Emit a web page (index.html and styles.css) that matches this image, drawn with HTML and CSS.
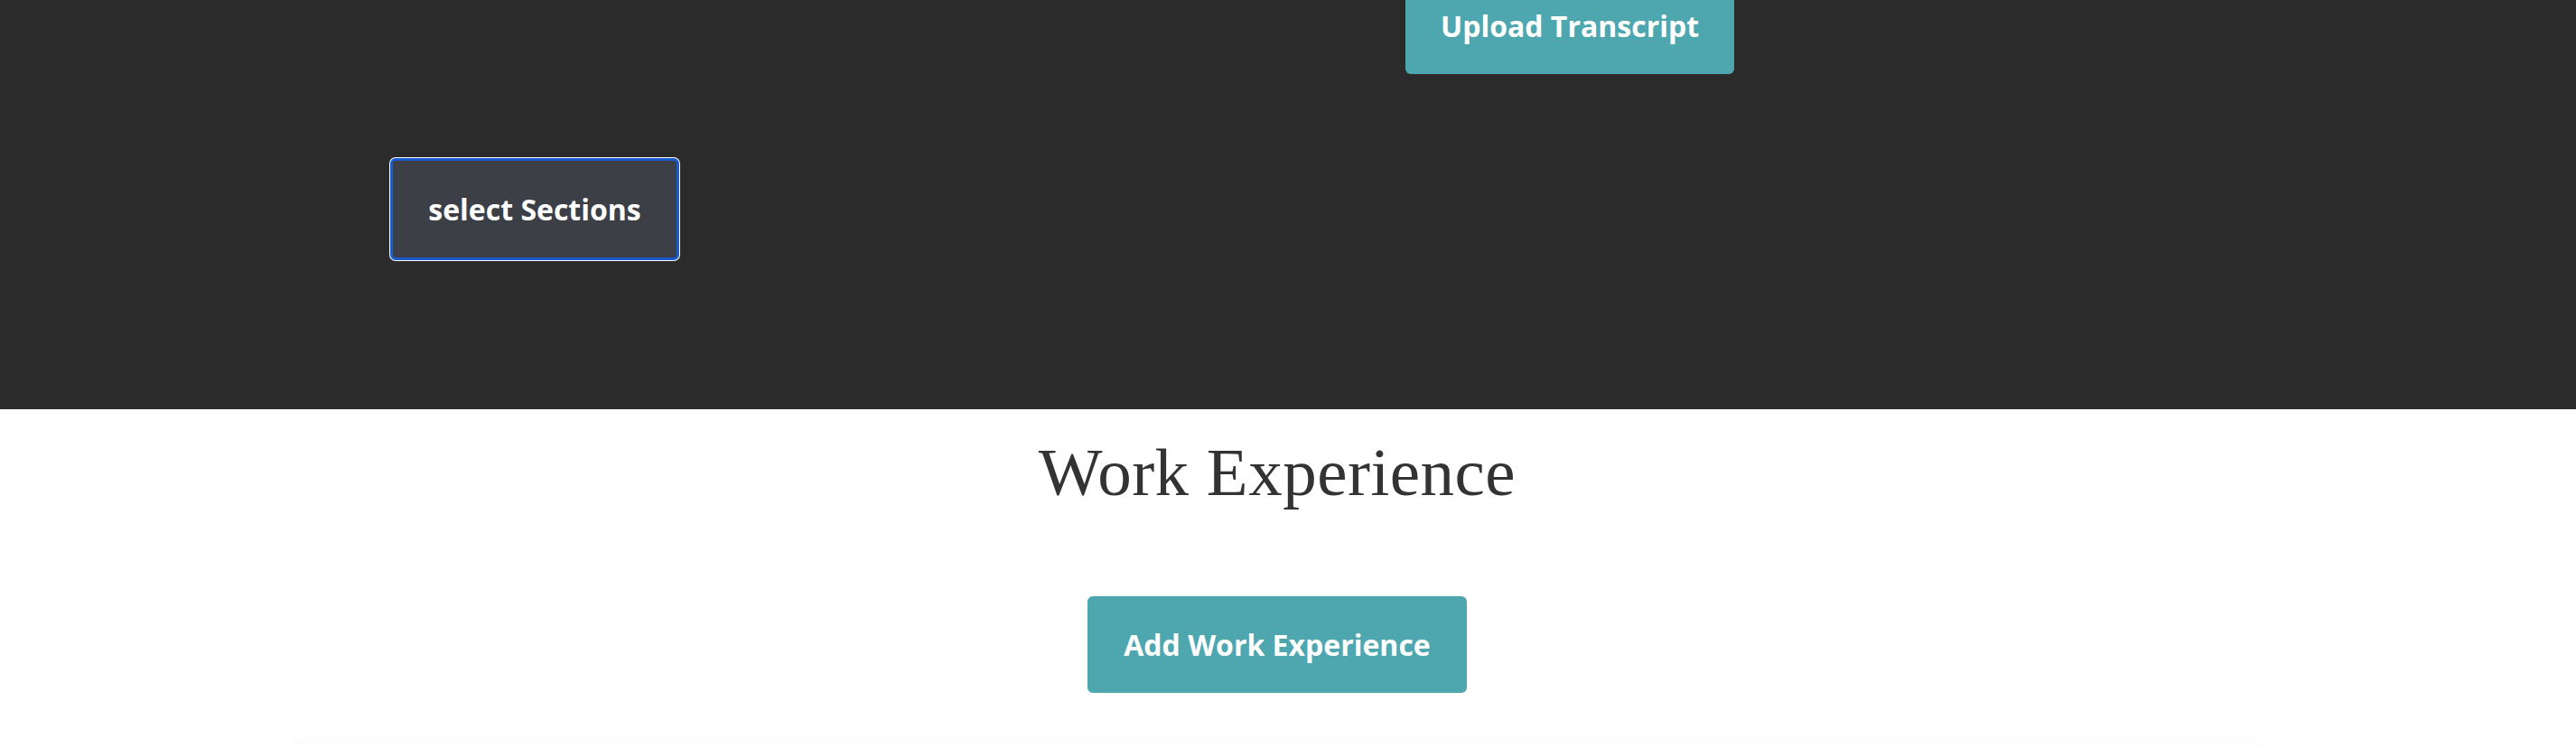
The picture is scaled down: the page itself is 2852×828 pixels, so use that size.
FILE: index.html
```html
<!DOCTYPE html>
<html lang="en">
<head>
<meta charset="utf-8">
<title>Work Experience</title>
<link rel="stylesheet" href="styles.css">
</head>
<body>
<header class="header">
  <div class="upload-row">
    <button class="btn btn-teal">Upload Transcript</button>
  </div>
  <div class="select-row">
    <button class="btn btn-select">select Sections</button>
  </div>
</header>
<main class="main">
  <h1 class="title">Work Experience</h1>
  <button class="btn btn-teal btn-add">Add Work Experience</button>
  <div class="card"></div>
</main>
</body>
</html>
```
FILE: styles.css
```css
html, body {
  margin: 0;
  padding: 0;
  background: #ffffff;
  font-family: "Open Sans", "Liberation Sans", sans-serif;
  overflow: hidden;
}

.header {
  background: #2b2b2b;
  height: 453px;
  box-sizing: border-box;
  display: flex;
  flex-direction: column;
}

.btn {
  font-family: "Open Sans", "Liberation Sans", sans-serif;
  font-weight: 700;
  color: #ffffff;
  border: none;
  cursor: pointer;
  line-height: 43px;
}

.btn-teal {
  background: #4ea7af;
  font-size: 32px;
  padding: 32px 40px;
  border-radius: 6px;
}

.upload-row {
  display: flex;
  padding-left: 1556px;
  margin-top: -25px;
}

.upload-row .btn {
  width: 364px;
  height: 107px;
  padding: 32px 0;
}

.select-row {
  display: flex;
  padding-left: 432px;
  margin-top: 93px;
}

.btn-select {
  background: #3c3f45;
  font-size: 32px;
  line-height: 43px;
  width: 320px;
  height: 113px;
  border: 3px solid #1a5bd0;
  border-radius: 6px;
  box-shadow: 0 0 0 1px #ffffff;
  padding: 0;
}

.main {
  display: flex;
  flex-direction: column;
  align-items: center;
  padding-right: 24px;
}

.title {
  font-family: "Liberation Serif", "DejaVu Serif", serif;
  font-weight: 400;
  font-size: 75px;
  letter-spacing: 0.5px;
  color: #333333;
  margin: 29px 0 0 0;
  line-height: 82px;
}

.btn-add {
  margin-top: 96px;
  width: 420px;
  height: 107px;
  padding: 32px 0;
}

.card {
  margin-top: 56px;
  width: 2180px;
  height: 100px;
  border-radius: 12px;
  background: #ffffff;
  box-shadow: 0 -4px 14px rgba(0, 0, 0, 0.025);
}
```
